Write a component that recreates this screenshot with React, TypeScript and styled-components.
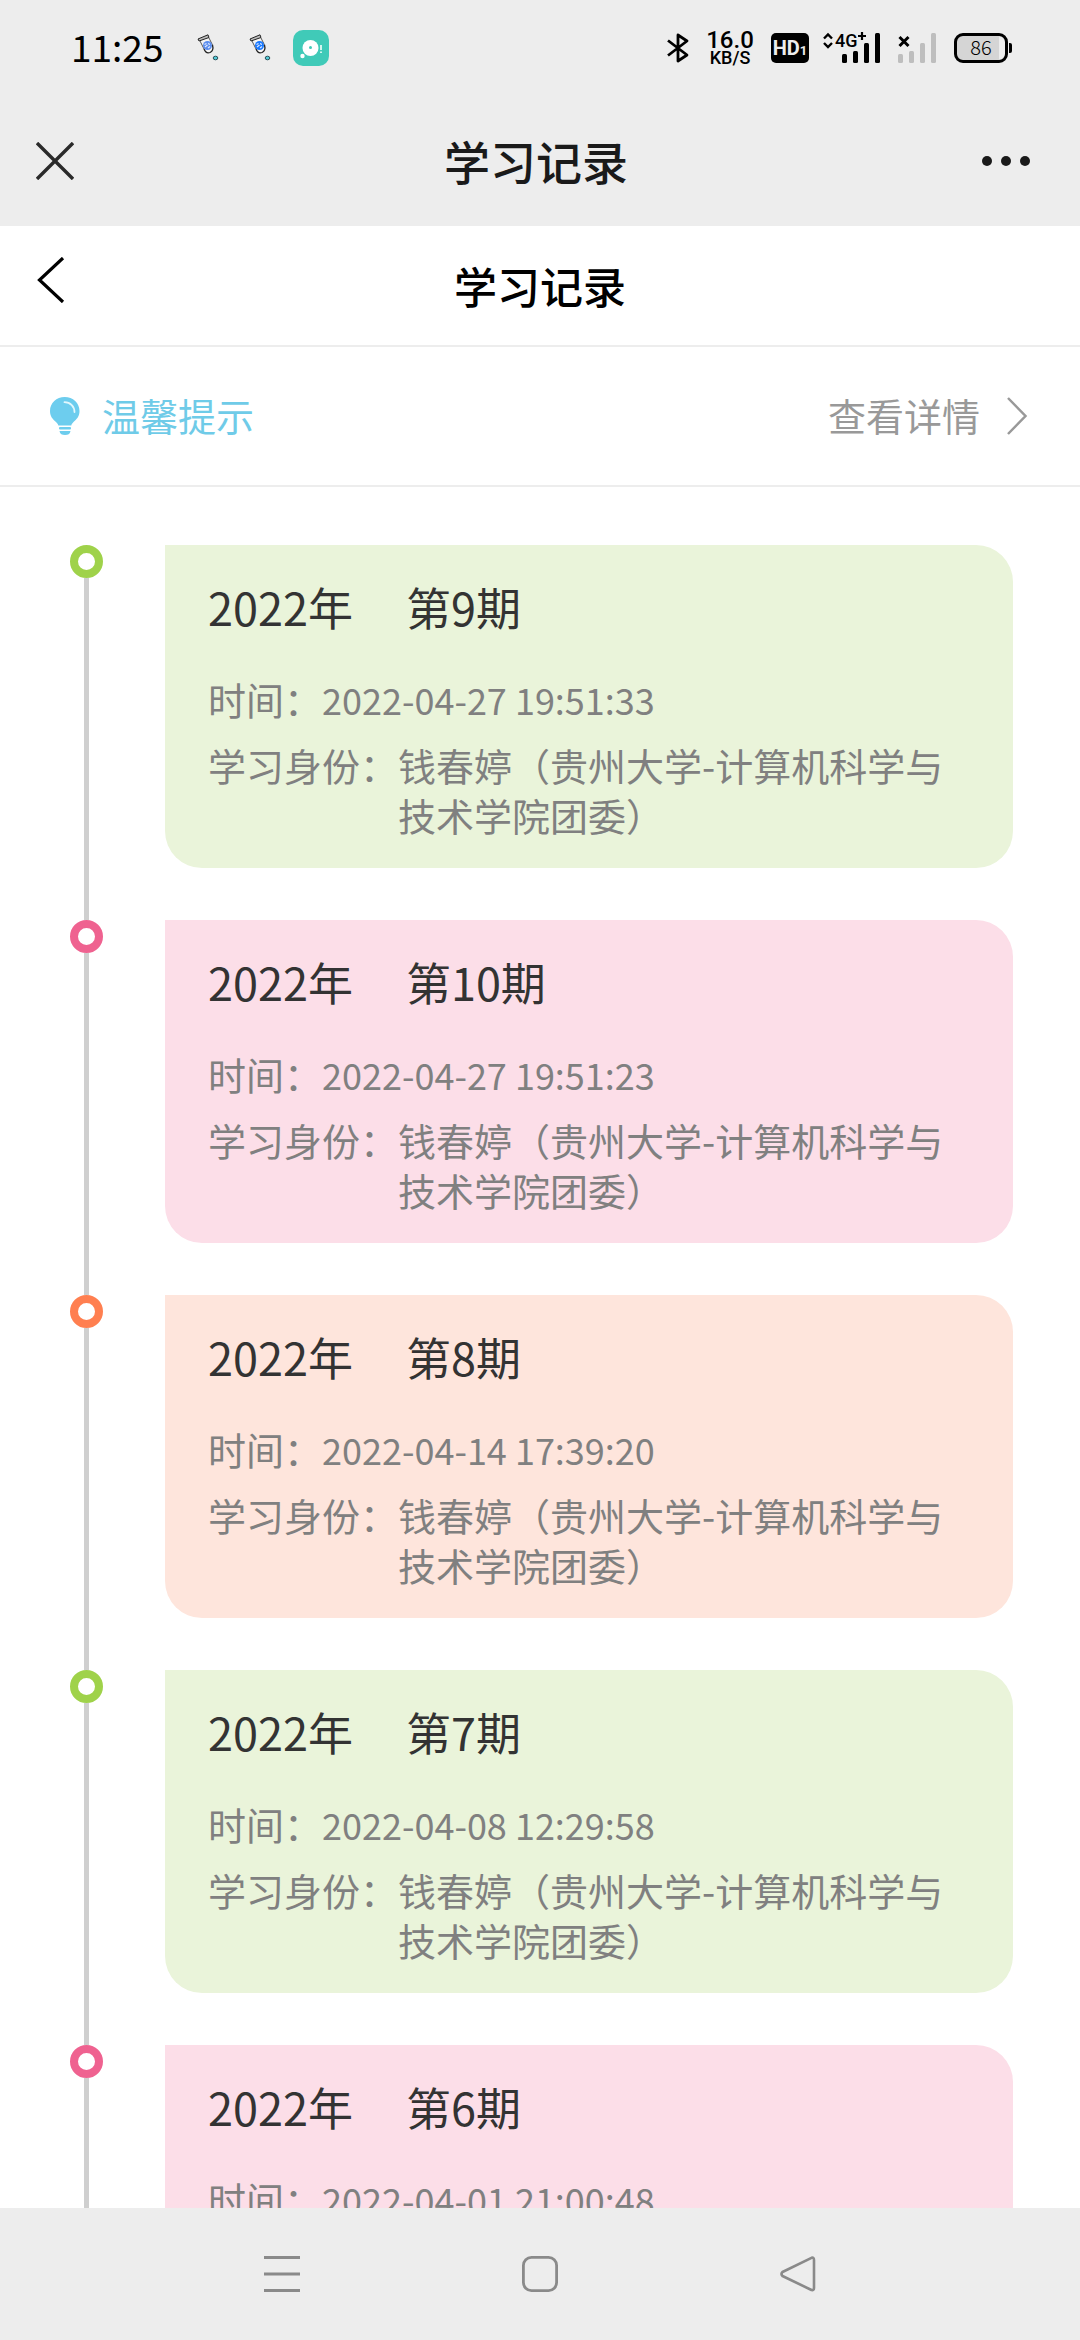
import React from "react";
import styled, { createGlobalStyle } from "styled-components";

const fontStack = `"Noto Sans CJK SC", "Noto Sans", sans-serif`;

const GlobalStyle = createGlobalStyle`
  *, *::before, *::after { box-sizing: border-box; }
  html, body { margin: 0; padding: 0; }
  body { background: #fff; font-family: ${fontStack}; }
  button { font: inherit; color: inherit; background: none; border: 0; padding: 0; margin: 0; cursor: pointer; }
  h1, h2, p, ol, dl, dd, dt { margin: 0; padding: 0; font-weight: inherit; }
  svg { display: block; flex: none; }
`;

const Screen = styled.div`
  display: flex;
  flex-direction: column;
  height: 100vh;
  overflow: hidden;
`;

const StatusBar = styled.div`
  flex: none;
  display: flex;
  align-items: center;
  justify-content: space-between;
  height: 96px;
  padding: 0 68px 0 71px;
  background: #ededed;
  color: #000;
`;

const StatusGroup = styled.div<{ $gap: number }>`
  display: flex;
  align-items: center;
  gap: ${(p) => p.$gap}px;
`;

const Clock = styled.time`
  width: 104px;
  padding-bottom: 4px;
  font-size: 37px;
  line-height: 48px;
`;

const NetSpeed = styled.div`
  display: flex;
  flex-direction: column;
  align-items: center;
  width: 46px;
  font-family: Roboto, sans-serif;
  font-weight: 500;
`;

const SpeedValue = styled.span`
  font-size: 24px;
  line-height: 20px;
`;

const SpeedUnit = styled.span`
  font-size: 18px;
  line-height: 16px;
`;

const HdBadge = styled.div`
  display: flex;
  align-items: baseline;
  justify-content: center;
  width: 38px;
  height: 30px;
  border-radius: 5px;
  background: #000;
  color: #ededed;
  font-family: Roboto, sans-serif;
  font-size: 20px;
  font-weight: 700;
  line-height: 30px;
`;

const HdIndex = styled.span`
  font-size: 13px;
`;

const Battery = styled.div`
  display: flex;
  align-items: center;
  gap: 1px;
`;

const BatteryCell = styled.div`
  width: 54px;
  height: 30px;
  border: 3px solid #000;
  border-radius: 9px;
  background: linear-gradient(to right, #d5d5d5 42px, #ededed 42px);
  font-size: 20px;
  font-weight: 300;
  line-height: 22px;
  text-align: center;
`;

const BatteryNub = styled.div`
  width: 3px;
  height: 10px;
  border-radius: 0 2px 2px 0;
  background: #000;
`;

const WebViewBar = styled.header`
  flex: none;
  display: grid;
  grid-template-columns: 1fr auto 1fr;
  align-items: center;
  height: 130px;
  padding: 0 44px 0 36px;
  background: #ededed;
  color: #1a1a1a;
`;

const IconButton = styled.button<{ $end?: boolean }>`
  justify-self: ${(p) => (p.$end ? "end" : "start")};
`;

const WebViewTitle = styled.h1`
  padding-bottom: 2px;
  font-size: 46px;
  line-height: 64px;
  font-weight: 500;
`;

const PageHeader = styled.header`
  flex: none;
  display: grid;
  grid-template-columns: 1fr auto 1fr;
  align-items: center;
  height: 121px;
  padding: 0 36px;
  border-bottom: 2px solid #ededed;
`;

const BackButton = styled(IconButton)`
  padding-bottom: 12px;
`;

const PageTitle = styled.h2`
  padding-bottom: 2px;
  font-size: 43px;
  line-height: 60px;
  font-weight: 500;
  color: #000;
`;

const TipRow = styled.div`
  flex: none;
  display: flex;
  align-items: center;
  justify-content: space-between;
  height: 140px;
  padding: 0 52px 0 48px;
  border-bottom: 2px solid #ededed;
  font-size: 38px;
  line-height: 50px;
`;

const TipLabel = styled.div`
  display: flex;
  align-items: center;
  gap: 20px;
  color: #6fcbe8;
`;

const TipText = styled.span`
  padding-bottom: 2px;
`;

const DetailButton = styled.button`
  display: flex;
  align-items: center;
  gap: 26px;
  color: #999;
`;

const Timeline = styled.ol`
  flex: 1;
  min-height: 0;
  overflow: hidden;
  padding-top: 58px;
  list-style: none;
`;

const Entry = styled.li`
  display: flex;
  gap: 62px;
  padding: 0 67px 0 70px;
`;

const Rail = styled.div`
  flex: none;
  display: flex;
  flex-direction: column;
  align-items: center;
  width: 33px;
`;

const Dot = styled.span<{ $color: string }>`
  width: 33px;
  height: 33px;
  border: 8px solid ${(p) => p.$color};
  border-radius: 50%;
`;

const RailLine = styled.span`
  flex: 1;
  width: 5px;
  background: #cfcfcf;
`;

const Card = styled.article<{ $color: string }>`
  flex: 1;
  margin-bottom: 52px;
  padding: 34px 43px 28px;
  border-radius: 0 37px 37px 37px;
  background: ${(p) => p.$color};
`;

const CardTitle = styled.h2`
  display: flex;
  gap: 53px;
  margin-bottom: 39px;
  font-size: 45px;
  line-height: 56px;
  color: #333;
`;

const Details = styled.dl`
  display: flex;
  flex-direction: column;
  gap: 16px;
  font-size: 38px;
  line-height: 50px;
  color: #808080;
`;

const Detail = styled.div`
  display: flex;
`;

const DetailName = styled.dt`
  flex: none;
`;

const DetailValue = styled.dd`
  flex: 1;
`;

const Timestamp = styled.dd`
  font-size: 36px;
`;

const NavBar = styled.nav`
  flex: none;
  display: flex;
  align-items: center;
  justify-content: center;
  gap: 222px;
  height: 132px;
  background: #ededed;
`;

const MugIcon = ({ fill, line }: { fill: string; line: string }) => (
  <svg width="22" height="28" viewBox="0 0 22 28" fill="none" aria-hidden="true">
    <path d="M2 7 L12 3.5 L16 11 Q17 17 12 18.5 Q8 19 6.500 15 Z" fill="#f4f4f4" />
    <path d="M1 5 L11 0.8 L12 3.5 L2 7 Z" fill="#bbb" stroke="#222" strokeWidth="1" />
    <path d="M3 7 L7 15 M12 4 L15.5 11" stroke="#555" strokeWidth="1" />
    <circle cx="10.500" cy="11.500" r="4.500" fill={fill} />
    <path d="M7.500 10.500 L9.500 9.500 M8 13 L10.500 11 M11 14 L13 12.500 M11.500 9 L12.500 11" stroke={line} strokeWidth="1.2" />
    <path d="M7 15 Q9 20 13 18.5 Q17 16.5 15.5 11" stroke="#222" strokeWidth="1.3" />
    <ellipse cx="18.5" cy="24" rx="2.3" ry="1.8" fill="#54c8d4" stroke="#28505a" strokeWidth="1" />
  </svg>
);

const ChatAppIcon = () => (
  <svg width="36" height="36" viewBox="0 0 36 36" aria-hidden="true">
    <rect width="36" height="36" rx="10" fill="#40cab8" />
    <circle cx="17.5" cy="18" r="8" fill="#fff" />
    <circle cx="17.5" cy="17.5" r="1.5" fill="#40cab8" />
    <circle cx="9.5" cy="26" r="2.2" fill="#fff" />
    <path d="M28 15v5M28 21.5v1.5" stroke="#d4f5ef" strokeWidth="2" />
  </svg>
);

const BluetoothIcon = () => (
  <svg width="22" height="30" viewBox="0 0 22 30" fill="none" stroke="#000" strokeWidth="2.8" strokeLinejoin="round" aria-label="蓝牙">
    <path d="M1 7.5 L20 22 L11 28 V2 L20 8 L1 22.5" />
  </svg>
);

const bars = [
  { x: 0, y: 21 },
  { x: 11, y: 18 },
  { x: 22, y: 10 },
  { x: 33, y: 0 },
];

const SignalBars = ({ x, color }: { x: number; color: string }) => (
  <g fill={color}>
    {bars.map((b) => (
      <rect key={b.x} x={x + b.x} y={b.y + 2} width="5" height={30 - b.y} rx="1.5" />
    ))}
  </g>
);

const MobileSignal = () => (
  <svg width="57" height="34" viewBox="0 0 57 34" fill="none" stroke="#000" aria-label="4G+">
    <path d="M1 7.5 L5 3.5 L9 7.5 M1 12 L5 16 L9 12" strokeWidth="2.4" />
    <text x="12" y="16" fontFamily="Roboto, sans-serif" fontSize="18" fontWeight="500" fill="#000" stroke="none">
      4G
    </text>
    <path d="M39 1 V9 M35 5 H43" strokeWidth="2.2" />
    <g stroke="none">
      <SignalBars x={19} color="#000" />
    </g>
  </svg>
);

const NoSignal = () => (
  <svg width="38" height="34" viewBox="0 0 38 34" fill="none" aria-label="无信号">
    <path d="M1.5 6 L10.5 15 M10.5 6 L1.5 15" stroke="#000" strokeWidth="3" />
    <SignalBars x={0} color="#bebebe" />
  </svg>
);

const CloseIcon = () => (
  <svg width="38" height="38" viewBox="0 0 38 38" stroke="#2a2a2a" strokeWidth="3.4">
    <path d="M1 1 L37 37 M37 1 L1 37" />
  </svg>
);

const MoreIcon = () => (
  <svg width="60" height="12" viewBox="0 0 60 12" fill="#1a1a1a">
    <circle cx="11" cy="6" r="5" />
    <circle cx="30" cy="6" r="5" />
    <circle cx="49" cy="6" r="5" />
  </svg>
);

const BackIcon = () => (
  <svg width="30" height="46" viewBox="0 0 30 46" fill="none" stroke="#000" strokeWidth="3.2">
    <path d="M27 1 L3.5 23 L27 45" />
  </svg>
);

const BulbIcon = () => (
  <svg width="34" height="40" viewBox="0 0 34 40" aria-hidden="true">
    <path
      d="M16.7 1 C25 1 31.5 7 31.5 15 C31.5 20.5 28.5 23.5 25.5 26 C24.3 27.3 23.5 28 23.3 29.5 H10.3 C10 28 9.3 27.3 8 26 C5 23.5 2 20.5 2 15 C2 7 8.500 1 16.7 1 Z"
      fill="#6dcdee"
    />
    <path d="M16.500 6.200 C22.500 6.200 26.500 10.500 26.500 16" fill="none" stroke="#e2f7fd" strokeWidth="1.800" strokeLinecap="round" />
    <rect x="11" y="31" width="12" height="2.500" rx="1" fill="#6dcdee" />
    <path d="M11.500 35 H22.500 C22 38 20 39 17 39 C14 39 12 38 11.500 35 Z" fill="#6dcdee" />
  </svg>
);

const ForwardIcon = () => (
  <svg width="22" height="40" viewBox="0 0 22 40" fill="none" stroke="#999" strokeWidth="2.5">
    <path d="M2 2 L19.500 20 L2 38" />
  </svg>
);

const RecentsIcon = () => (
  <svg width="36" height="36" viewBox="0 0 36 36" stroke="#8a8a8a" strokeWidth="3">
    <path d="M0 1.500 H36 M0 18 H36 M0 34.500 H36" />
  </svg>
);

const HomeIcon = () => (
  <svg width="36" height="36" viewBox="0 0 36 36" fill="none" stroke="#8a8a8a" strokeWidth="2.800">
    <rect x="1.400" y="1.400" width="33.200" height="33.200" rx="8" />
  </svg>
);

const NavBackIcon = () => (
  <svg width="36" height="36" viewBox="0 0 36 36" fill="none" stroke="#8a8a8a" strokeWidth="2.600" strokeLinejoin="round">
    <path d="M31.500 1.800 L2.500 16 Q0.500 18 2.500 20 L31.500 34 Q34 34.500 34 32 V4 Q34 1 31.500 1.800 Z" />
  </svg>
);

const palette = {
  green: { dot: "#9fd24a", card: "#eaf4da" },
  pink: { dot: "#ef6290", card: "#fcdee8" },
  orange: { dot: "#ff7f50", card: "#fee5dc" },
};

type Tone = keyof typeof palette;

const records: { issue: string; time: string; tone: Tone }[] = [
  { issue: "第9期", time: "2022-04-27 19:51:33", tone: "green" },
  { issue: "第10期", time: "2022-04-27 19:51:23", tone: "pink" },
  { issue: "第8期", time: "2022-04-14 17:39:20", tone: "orange" },
  { issue: "第7期", time: "2022-04-08 12:29:58", tone: "green" },
  { issue: "第6期", time: "2022-04-01 21:00:48", tone: "pink" },
];

export default function App() {
  return (
    <>
      <GlobalStyle />
      <Screen>
        <StatusBar>
          <StatusGroup $gap={22}>
            <Clock>11:25</Clock>
            <StatusGroup $gap={30}>
              <MugIcon fill="#5b8def" line="#dce8ff" />
              <MugIcon fill="#1677ff" line="#dce8ff" />
            </StatusGroup>
            <ChatAppIcon />
          </StatusGroup>
          <StatusGroup $gap={18}>
            <BluetoothIcon />
            <NetSpeed>
              <SpeedValue>16.0</SpeedValue>
              <SpeedUnit>KB/S</SpeedUnit>
            </NetSpeed>
            <StatusGroup $gap={14}>
              <HdBadge>
                HD<HdIndex>1</HdIndex>
              </HdBadge>
              <MobileSignal />
            </StatusGroup>
            <NoSignal />
            <Battery>
              <BatteryCell>86</BatteryCell>
              <BatteryNub />
            </Battery>
          </StatusGroup>
        </StatusBar>

        <WebViewBar>
          <IconButton aria-label="关闭">
            <CloseIcon />
          </IconButton>
          <WebViewTitle>学习记录</WebViewTitle>
          <IconButton $end aria-label="更多">
            <MoreIcon />
          </IconButton>
        </WebViewBar>

        <PageHeader>
          <BackButton aria-label="返回">
            <BackIcon />
          </BackButton>
          <PageTitle>学习记录</PageTitle>
        </PageHeader>

        <TipRow>
          <TipLabel>
            <BulbIcon />
            <TipText>温馨提示</TipText>
          </TipLabel>
          <DetailButton>
            <TipText>查看详情</TipText>
            <ForwardIcon />
          </DetailButton>
        </TipRow>

        <Timeline>
          {records.map((r) => (
            <Entry key={r.issue}>
              <Rail>
                <Dot $color={palette[r.tone].dot} />
                <RailLine />
              </Rail>
              <Card $color={palette[r.tone].card}>
                <CardTitle>
                  <span>2022年</span>
                  <span>{r.issue}</span>
                </CardTitle>
                <Details>
                  <Detail>
                    <DetailName>时间：</DetailName>
                    <Timestamp>{r.time}</Timestamp>
                  </Detail>
                  <Detail>
                    <DetailName>学习身份：</DetailName>
                    <DetailValue>钱春婷（贵州大学-计算机科学与技术学院团委）</DetailValue>
                  </Detail>
                </Details>
              </Card>
            </Entry>
          ))}
        </Timeline>

        <NavBar>
          <button aria-label="最近任务">
            <RecentsIcon />
          </button>
          <button aria-label="主页">
            <HomeIcon />
          </button>
          <button aria-label="后退">
            <NavBackIcon />
          </button>
        </NavBar>
      </Screen>
    </>
  );
}
